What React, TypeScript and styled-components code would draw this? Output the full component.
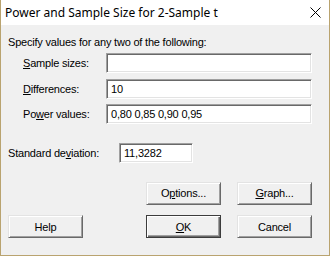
import React from "react";
import styled, { createGlobalStyle } from "styled-components";

const GlobalStyle = createGlobalStyle`
  html, body {
    margin: 0;
    padding: 0;
    background: #ffffff;
  }
  * {
    box-sizing: border-box;
  }
`;

const Window = styled.div`
  width: 330px;
  height: 256px;
  display: flex;
  flex-direction: column;
  border: 1px solid #b9a36f;
  border-top: none;
  background: #f0f0f0;
  font-family: "Liberation Sans", Arial, sans-serif;
  font-size: 11px;
  letter-spacing: -0.2px;
  color: #000;
`;

const TitleBar = styled.div`
  height: 25px;
  flex: none;
  display: flex;
  align-items: center;
  justify-content: space-between;
  padding: 0 8px 1px 4px;
  background: #ffffff;
  font-family: "Noto Sans", "Open Sans", sans-serif;
  font-size: 12px;
  letter-spacing: 0;
`;

const Title = styled.span`
  white-space: nowrap;
`;

const Body = styled.div`
  flex: 1;
  display: flex;
  flex-direction: column;
  padding: 10px 17px 0 7px;
`;

const Intro = styled.div`
  line-height: 14px;
  height: 14px;
  white-space: nowrap;
`;

const FieldGrid = styled.div`
  display: grid;
  grid-template-columns: 98px 1fr;
  grid-auto-rows: 20px;
  row-gap: 5.5px;
  margin-top: 4px;
  align-items: center;
`;

const Label = styled.label<{ $indent?: number }>`
  padding-left: ${(p) => p.$indent ?? 0}px;
  white-space: nowrap;
`;

const Field = styled.div<{ $width?: number }>`
  height: 20px;
  width: ${(p) => (p.$width ? `${p.$width}px` : "auto")};
  display: flex;
  align-items: center;
  padding: 0 4px;
  background: #ffffff;
  border: 1px solid;
  border-color: #a0a0a0 #ffffff #ffffff #a0a0a0;
  box-shadow: inset 1px 1px #696969, inset -1px -1px #e3e3e3;
  white-space: nowrap;
`;

const StdRow = styled.div`
  display: flex;
  align-items: center;
  margin-top: 18.5px;
  height: 20px;
`;

const StdLabel = styled.label`
  width: 111px;
  white-space: nowrap;
`;

const ButtonGrid = styled.div`
  display: grid;
  grid-template-columns: 75px 1fr 75px 75px;
  grid-template-rows: 23px 23px;
  column-gap: 16px;
  row-gap: 10.5px;
  margin-top: 19px;
`;

const Button = styled.button<{ $default?: boolean; $col: number; $row: number }>`
  grid-column: ${(p) => p.$col};
  grid-row: ${(p) => p.$row};
  height: 23px;
  margin: 0;
  padding: 0;
  background: #f0f0f0;
  font-family: inherit;
  font-size: 11px;
  letter-spacing: inherit;
  color: #000;
  border: 1px solid;
  border-color: ${(p) =>
    p.$default ? "#3c3c3c" : "#e3e3e3 #696969 #696969 #e3e3e3"};
  box-shadow: ${(p) =>
    p.$default
      ? "inset 1px 1px #ffffff, inset -1px -1px #696969, inset -2px -2px #a0a0a0"
      : "inset 1px 1px #ffffff, inset -1px -1px #a0a0a0"};
`;

const Key = styled.span`
  text-decoration: underline;
`;

const CloseIcon = () => (
  <svg width="11" height="11" viewBox="0 0 11 11">
    <path d="M0.5 0.5 L10.5 10.5 M10.5 0.5 L0.5 10.5" stroke="#000" strokeWidth="1" />
  </svg>
);

export default function App() {
  return (
    <>
      <GlobalStyle />
      <Window>
        <TitleBar>
          <Title>Power and Sample Size for 2-Sample t</Title>
          <CloseIcon />
        </TitleBar>
        <Body>
          <Intro>Specify values for any two of the following:</Intro>
          <FieldGrid>
            <Label $indent={15}>
              <Key>S</Key>ample sizes:
            </Label>
            <Field />
            <Label $indent={15}>
              <Key>D</Key>ifferences:
            </Label>
            <Field>10</Field>
            <Label $indent={15}>
              Po<Key>w</Key>er values:
            </Label>
            <Field>0,80 0,85 0,90 0,95</Field>
          </FieldGrid>
          <StdRow>
            <StdLabel>
              Standard de<Key>v</Key>iation:
            </StdLabel>
            <Field $width={74}>11,3282</Field>
          </StdRow>
          <ButtonGrid>
            <Button $col={3} $row={1}>
              O<Key>p</Key>tions...
            </Button>
            <Button $col={4} $row={1}>
              <Key>G</Key>raph...
            </Button>
            <Button $col={1} $row={2}>
              Help
            </Button>
            <Button $col={3} $row={2} $default>
              <Key>O</Key>K
            </Button>
            <Button $col={4} $row={2}>
              Cancel
            </Button>
          </ButtonGrid>
        </Body>
      </Window>
    </>
  );
}
